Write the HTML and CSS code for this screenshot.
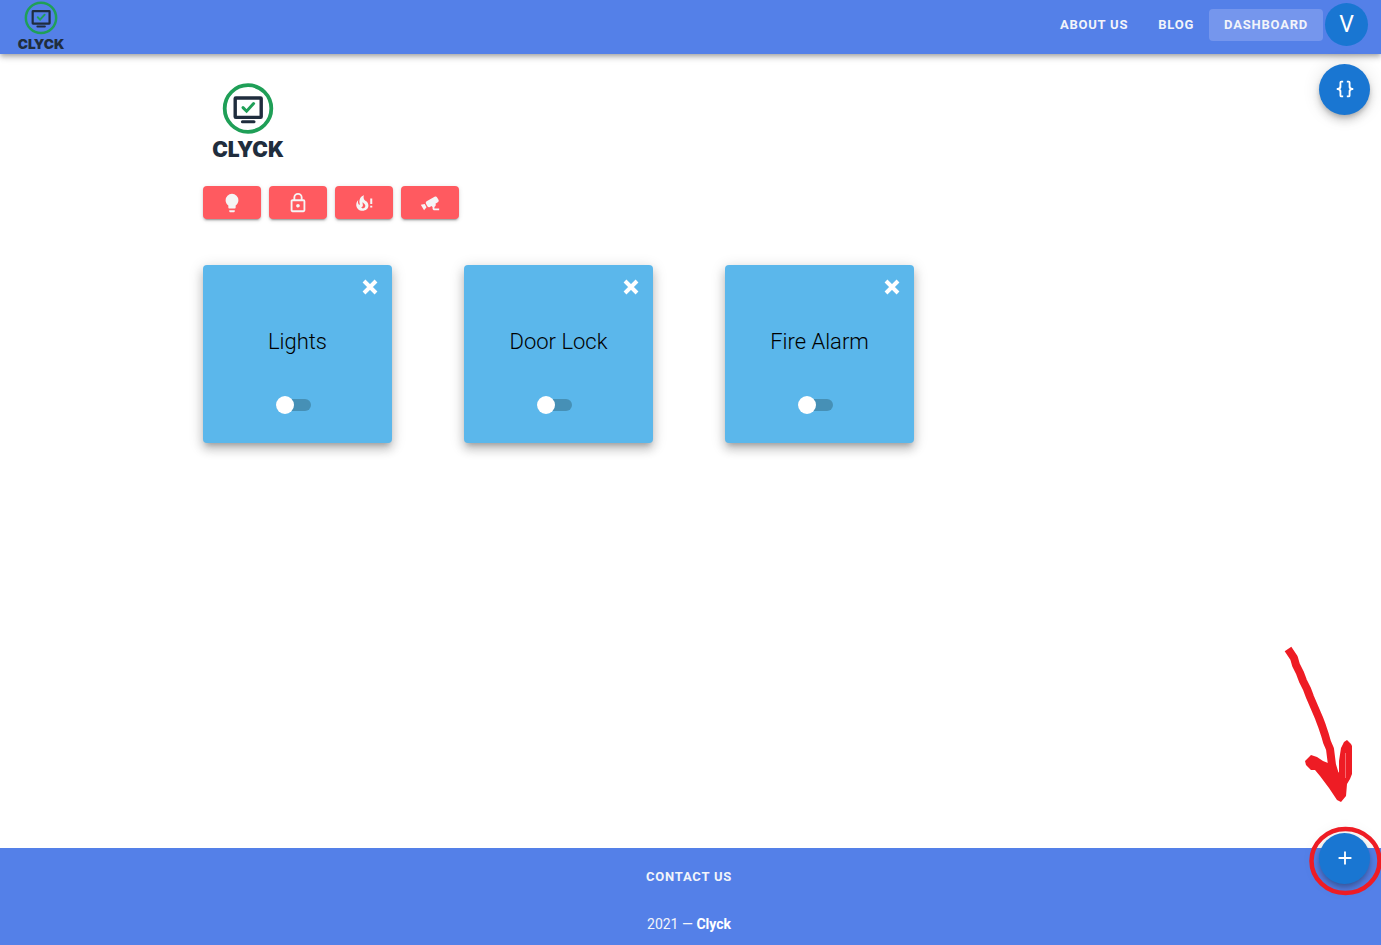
FILE: index.html
```html
<!DOCTYPE html>
<html lang="en">
<head>
<meta charset="utf-8">
<meta name="viewport" content="width=device-width, initial-scale=1">
<title>Clyck Dashboard</title>
<link rel="stylesheet" href="styles.css">
</head>
<body>
<header class="topbar">
  <a href="#" class="brand" aria-label="Clyck home">
    <svg width="52" height="52" viewBox="8 6 80 80">
      <circle cx="48" cy="33.5" r="23.3" fill="none" stroke="#1f9f57" stroke-width="3.8"/>
      <rect x="35.2" y="23" width="26" height="19.4" rx="0.6" fill="none" stroke="#1f2d3d" stroke-width="3.4"/>
      <path d="M43 32.6l3.6 3.6 7-7.6" fill="none" stroke="#1f9f57" stroke-width="3" stroke-linecap="round"/>
      <path d="M42.4 46.8h11.6" stroke="#1f2d3d" stroke-width="3" stroke-linecap="round"/>
      <text x="48" y="82" text-anchor="middle" class="logo-text">CLYCK</text>
    </svg>
  </a>
  <nav class="nav">
    <a href="#" class="link">ABOUT US</a>
    <a href="#" class="link">BLOG</a>
    <a href="#" class="link active">DASHBOARD</a>
  </nav>
  <button class="avatar">V</button>
</header>

<main class="content">
  <svg class="main-logo" width="80" height="80" viewBox="8 6 80 80" role="img" aria-label="Clyck">
    <circle cx="48" cy="33.5" r="23.3" fill="none" stroke="#1f9f57" stroke-width="3.8"/>
    <rect x="35.2" y="23" width="26" height="19.4" rx="0.6" fill="none" stroke="#1f2d3d" stroke-width="3.4"/>
    <path d="M43 32.6l3.6 3.6 7-7.6" fill="none" stroke="#1f9f57" stroke-width="3" stroke-linecap="round"/>
    <path d="M42.4 46.8h11.6" stroke="#1f2d3d" stroke-width="3" stroke-linecap="round"/>
    <text x="48" y="82" text-anchor="middle" class="logo-text">CLYCK</text>
  </svg>
  <div class="tools">
    <button class="tool" aria-label="Add light"><svg class="icon" viewBox="0 0 24 24"><path d="M12,2A7,7 0 0,0 5,9C5,11.38 6.19,13.47 8,14.74V17A1,1 0 0,0 9,18H15A1,1 0 0,0 16,17V14.74C17.81,13.47 19,11.38 19,9A7,7 0 0,0 12,2M9,21A1,1 0 0,0 10,22H14A1,1 0 0,0 15,21V20H9V21Z"/></svg></button>
    <button class="tool" aria-label="Add door lock"><svg class="icon" viewBox="0 0 24 24"><path d="M12,17C10.89,17 10,16.1 10,15C10,13.89 10.89,13 12,13A2,2 0 0,1 14,15A2,2 0 0,1 12,17M18,20V10H6V20H18M18,8A2,2 0 0,1 20,10V20A2,2 0 0,1 18,22H6C4.89,22 4,21.1 4,20V10C4,8.89 4.89,8 6,8H7V6A5,5 0 0,1 12,1A5,5 0 0,1 17,6V8H18M12,3A3,3 0 0,0 9,6V8H15V6A3,3 0 0,0 12,3Z"/></svg></button>
    <button class="tool" aria-label="Add fire alarm"><svg class="icon" viewBox="0 0 24 24"><path transform="translate(-1.2 .6) scale(.95)" d="M17.66 11.2C17.43 10.9 17.15 10.64 16.89 10.38C16.22 9.78 15.46 9.35 14.82 8.72C13.33 7.26 13 4.85 13.95 3C13 3.23 12.17 3.75 11.46 4.32C8.87 6.4 7.85 10.07 9.07 13.22C9.11 13.32 9.15 13.42 9.15 13.55C9.15 13.77 9 13.97 8.8 14.05C8.57 14.15 8.33 14.09 8.14 13.93C8.08 13.88 8.04 13.83 8 13.76C6.87 12.33 6.69 10.28 7.45 8.64C5.78 10 4.87 12.3 5 14.47C5.06 14.97 5.12 15.47 5.29 15.97C5.43 16.57 5.7 17.17 6 17.7C7.08 19.43 8.95 20.67 10.96 20.92C13.1 21.19 15.39 20.8 17.03 19.32C18.86 17.66 19.5 15 18.56 12.72L18.43 12.46C18.22 12 17.66 11.2 17.66 11.2M14.5 17.5C14.22 17.74 13.76 18 13.4 18.1C12.28 18.5 11.16 17.94 10.5 17.28C11.69 17 12.4 16.12 12.61 15.23C12.78 14.43 12.46 13.77 12.33 13C12.21 12.26 12.23 11.63 12.5 10.94C12.69 11.32 12.89 11.7 13.13 12C13.9 13 15.11 13.44 15.37 14.8C15.41 14.94 15.43 15.08 15.43 15.23C15.46 16.05 15.1 16.95 14.5 17.5Z"/><path d="M18.8 7h2.2v6h-2.2zM18.8 15h2.2v2h-2.2z"/></svg></button>
    <button class="tool" aria-label="Add camera"><svg class="icon" viewBox="0 0 24 24"><path d="M18.15,4.94C17.77,4.91 17.37,5 17,5.2L8.35,10.2C7.39,10.76 7.07,12 7.62,12.94L9.12,15.53C9.67,16.5 10.89,16.82 11.85,16.27L13.65,15.23C13.92,15.69 14.32,16.06 14.81,16.27V18.04C14.81,19.13 15.7,20 16.81,20H22V18.04H16.81V16.27C17.72,15.87 18.31,14.97 18.31,14C18.31,13.54 18.19,13.11 17.97,12.73L20.5,11.27C21.47,10.71 21.8,9.5 21.24,8.53L19.74,5.94C19.4,5.34 18.79,5 18.15,4.94M6.22,13.17L2,13.87L2.75,15.17L4.75,18.63L5.5,19.93L8.22,16.63L6.22,13.17Z"/></svg></button>
  </div>
  <div class="cards">
    <section class="card">
      <button class="close" aria-label="Remove Lights"><svg width="16" height="16" viewBox="0 0 16 16"><path d="M2 2l12 12M14 2L2 14"/></svg></button>
      <label class="title" for="lights">Lights</label>
      <input class="switch" type="checkbox" id="lights">
    </section>
    <section class="card">
      <button class="close" aria-label="Remove Door Lock"><svg width="16" height="16" viewBox="0 0 16 16"><path d="M2 2l12 12M14 2L2 14"/></svg></button>
      <label class="title" for="door">Door Lock</label>
      <input class="switch" type="checkbox" id="door">
    </section>
    <section class="card">
      <button class="close" aria-label="Remove Fire Alarm"><svg width="16" height="16" viewBox="0 0 16 16"><path d="M2 2l12 12M14 2L2 14"/></svg></button>
      <label class="title" for="fire">Fire Alarm</label>
      <input class="switch" type="checkbox" id="fire">
    </section>
  </div>
</main>

<footer class="footer">
  <a href="#" class="contact">CONTACT US</a>
  <div class="copyright">2021 — <strong>Clyck</strong></div>
</footer>

<button class="fab fab-code" aria-label="Show code"><svg class="icon" viewBox="0 0 24 24"><path d="M8,3A2,2 0 0,0 6,5V9A2,2 0 0,1 4,11H3V13H4A2,2 0 0,1 6,15V19A2,2 0 0,0 8,21H10V19H8V14A2,2 0 0,0 6,12A2,2 0 0,0 8,10V5H10V3M16,3A2,2 0 0,1 18,5V9A2,2 0 0,0 20,11H21V13H20A2,2 0 0,0 18,15V19A2,2 0 0,1 16,21H14V19H16V14A2,2 0 0,1 18,12A2,2 0 0,1 16,10V5H14V3H16Z"/></svg></button>
<button class="fab fab-add" aria-label="Add device"><svg class="icon" viewBox="0 0 24 24"><path d="M19,13H13V19H11V13H5V11H11V5H13V11H19V13Z"/></svg></button>

<svg class="marker" width="111" height="265" viewBox="0 0 111 265" aria-hidden="true">
  <g fill="none" stroke="#ee1c24">
    <ellipse cx="75.5" cy="226" rx="34" ry="32" stroke-width="4.5"/>
    <path d="M18 14L24 23 26 30 30 38 33 46 37 54 40 62 43 69 46 76 49 83 52 91 55 100 57 107 60 114 62 130 68 150" stroke-width="8" stroke-linejoin="bevel"/>
  </g>
  <path fill="#ee1c24" d="M35 126L41 120 47 122 53 126 58 128 64 132 69 138V126L71 113 74 107 77 105 81 109 82 111V139L80 144 77 149 76 161 71 167 67 165 59 153 50 141 45 135H41L36 130Z"/>
  <path d="M75.5 118V143" stroke="#f56a70" stroke-width="1"/>
</svg>
</body>
</html>
```
FILE: styles.css
```css
* {
  box-sizing: border-box;
}

body {
  margin: 0;
  min-height: 100vh;
  display: flex;
  flex-direction: column;
  background: #fff;
  font-family: Roboto, "Liberation Sans", sans-serif;
  color: rgba(0, 0, 0, 0.87);
}

button {
  border: 0;
  padding: 0;
  font: inherit;
  color: inherit;
  cursor: pointer;
  display: flex;
  align-items: center;
  justify-content: center;
}

a {
  color: inherit;
  text-decoration: none;
}

.logo-text {
  font: 900 21px Inter, Roboto, sans-serif;
  fill: #1f2d3d;
}

.icon {
  width: 22px;
  height: 22px;
  fill: currentColor;
}

.topbar {
  display: flex;
  align-items: flex-start;
  height: 54px;
  padding: 0 13px 0 15px;
  background: #5480e8;
  color: #f2f4fa;
  box-shadow: 0 2px 4px -1px rgba(0, 0, 0, 0.2), 0 4px 5px rgba(0, 0, 0, 0.14), 0 1px 10px rgba(0, 0, 0, 0.12);
}

.brand,
.brand svg {
  display: block;
}

.nav {
  display: flex;
  margin: 9px 2px 0 auto;
}

.link {
  padding: 0 15px;
  border-radius: 4px;
  font-size: 13px;
  font-weight: 700;
  line-height: 32px;
  letter-spacing: 0.06em;
}

.link.active {
  background: #7596ed;
}

.avatar {
  width: 43px;
  height: 43px;
  margin-top: 3px;
  border-radius: 50%;
  background: #1976d2;
  color: #fff;
  font-size: 23px;
}

.content {
  flex: 1;
  width: 100%;
  max-width: 1045px;
  margin: 0 auto;
  padding: 27px 35px;
}

.main-logo {
  display: block;
  margin-left: 5px;
}

.tools {
  display: flex;
  gap: 8px;
  margin: 25px 0 46px;
}

.tool {
  width: 58px;
  height: 33px;
  border-radius: 4px;
  background: #ff5a60;
  color: #f5f5f5;
  box-shadow: 0 3px 1px -2px rgba(0, 0, 0, 0.2), 0 2px 2px rgba(0, 0, 0, 0.14), 0 1px 5px rgba(0, 0, 0, 0.12);
}

.cards {
  display: grid;
  grid-template-columns: repeat(auto-fill, 189px);
  gap: 72px;
}

.card {
  display: flex;
  flex-direction: column;
  align-items: center;
  padding: 14px 14px 29px;
  border-radius: 4px;
  background: #5bb7eb;
  box-shadow: 0 5px 5px -3px rgba(0, 0, 0, 0.2), 0 6px 10px 1px rgba(0, 0, 0, 0.14), 0 3px 14px 2px rgba(0, 0, 0, 0.12);
}

.close {
  align-self: flex-end;
  background: none;
}

.close path {
  stroke: #fff;
  stroke-width: 4;
}

.title {
  margin: 30px 0 38px;
  font-size: 22px;
  font-weight: 300;
  line-height: 33px;
  color: #000;
}

.switch {
  appearance: none;
  display: flex;
  align-items: center;
  width: 35px;
  height: 12px;
  margin: 3px 8px 3px 0;
  background: #4690b6;
  border-radius: 6px;
  cursor: pointer;
}

.switch::before {
  content: "";
  width: 18px;
  height: 18px;
  border-radius: 50%;
  background: #fff;
}

.switch:checked::before {
  margin-left: auto;
}

.footer {
  display: flex;
  flex-direction: column;
  align-items: center;
  gap: 23px;
  padding: 17px 3px 9px 0;
  background: #5480e8;
  color: #f2f4fa;
  font-size: 14px;
  line-height: 24px;
}

.contact {
  font-size: 13px;
  font-weight: 700;
  letter-spacing: 0.06em;
}

.copyright strong {
  color: #fff;
}

.fab {
  position: fixed;
  right: 11px;
  width: 51px;
  height: 51px;
  padding-bottom: 2px;
  border-radius: 50%;
  background: #1976d2;
  color: #fff;
  box-shadow: 0 3px 5px -1px rgba(0, 0, 0, 0.2), 0 6px 10px rgba(0, 0, 0, 0.14), 0 1px 18px rgba(0, 0, 0, 0.12);
}

.fab-code {
  top: 64px;
}

.fab-add {
  bottom: 61px;
}

.marker {
  position: fixed;
  right: 0;
  bottom: 45px;
  pointer-events: none;
}
```
